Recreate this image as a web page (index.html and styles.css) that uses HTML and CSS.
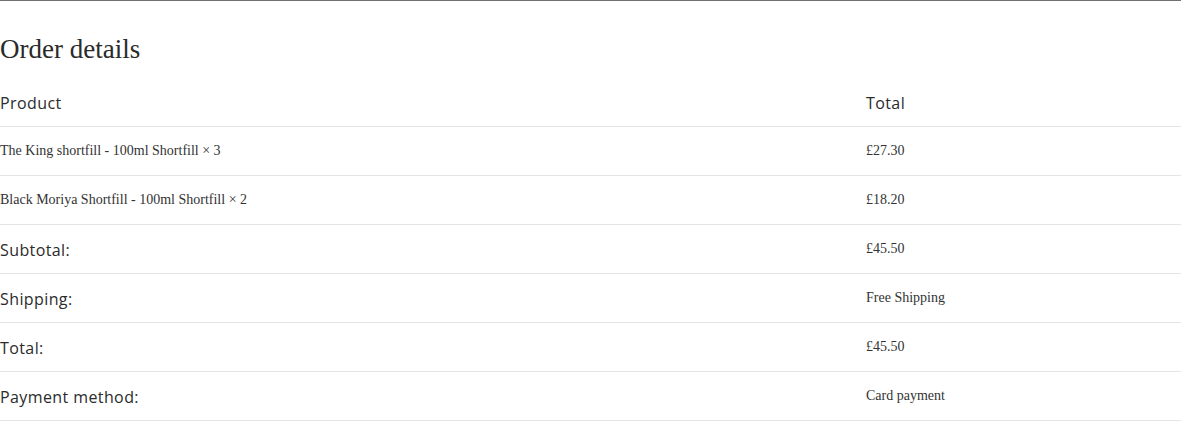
FILE: index.html
```html
<!DOCTYPE html>
<html lang="en">
<head>
<meta charset="utf-8">
<title>Order details</title>
<link rel="stylesheet" href="styles.css">
</head>
<body>
<section class="order">
  <h2 class="order-title">Order details</h2>
  <table class="order-table">
    <thead>
      <tr>
        <th class="col-product">Product</th>
        <th class="col-total">Total</th>
      </tr>
    </thead>
    <tbody>
      <tr>
        <td class="item">The King shortfill - 100ml Shortfill × 3</td>
        <td class="value">£27.30</td>
      </tr>
      <tr>
        <td class="item">Black Moriya Shortfill - 100ml Shortfill × 2</td>
        <td class="value">£18.20</td>
      </tr>
    </tbody>
    <tfoot>
      <tr>
        <th class="label">Subtotal:</th>
        <td class="value">£45.50</td>
      </tr>
      <tr>
        <th class="label">Shipping:</th>
        <td class="value">Free Shipping</td>
      </tr>
      <tr>
        <th class="label">Total:</th>
        <td class="value">£45.50</td>
      </tr>
      <tr>
        <th class="label">Payment method:</th>
        <td class="value">Card payment</td>
      </tr>
    </tfoot>
  </table>
</section>
</body>
</html>
```
FILE: styles.css
```css
html, body {
  margin: 0;
  padding: 0;
  background: #ffffff;
}

body {
  font-family: "Liberation Serif", "Times New Roman", serif;
  color: #333333;
}

.order {
  width: 1181px;
  border-top: 1px solid #707070;
}

.order-title {
  margin: 0;
  height: 77px;
  padding-top: 31px;
  box-sizing: border-box;
  font-family: "Liberation Serif", serif;
  font-weight: normal;
  font-size: 27px;
  line-height: 34px;
  color: #2a2a2a;
}

.order-table {
  width: 100%;
  border-collapse: collapse;
  table-layout: fixed;
}

.order-table th,
.order-table td {
  height: 48px;
  padding: 0;
  line-height: 20px;
  text-align: left;
  vertical-align: middle;
  border-bottom: 1px solid #e4e4e4;
}

.col-product {
  width: 866px;
}

.order-table th {
  height: 46px;
  padding-top: 2px;
  font-family: "Open Sans", "Lato", sans-serif;
  font-weight: normal;
  font-size: 16px;
  letter-spacing: 0.4px;
  color: #2b2b2b;
}

.order-table td {
  font-size: 14px;
  color: #333333;
}
```
